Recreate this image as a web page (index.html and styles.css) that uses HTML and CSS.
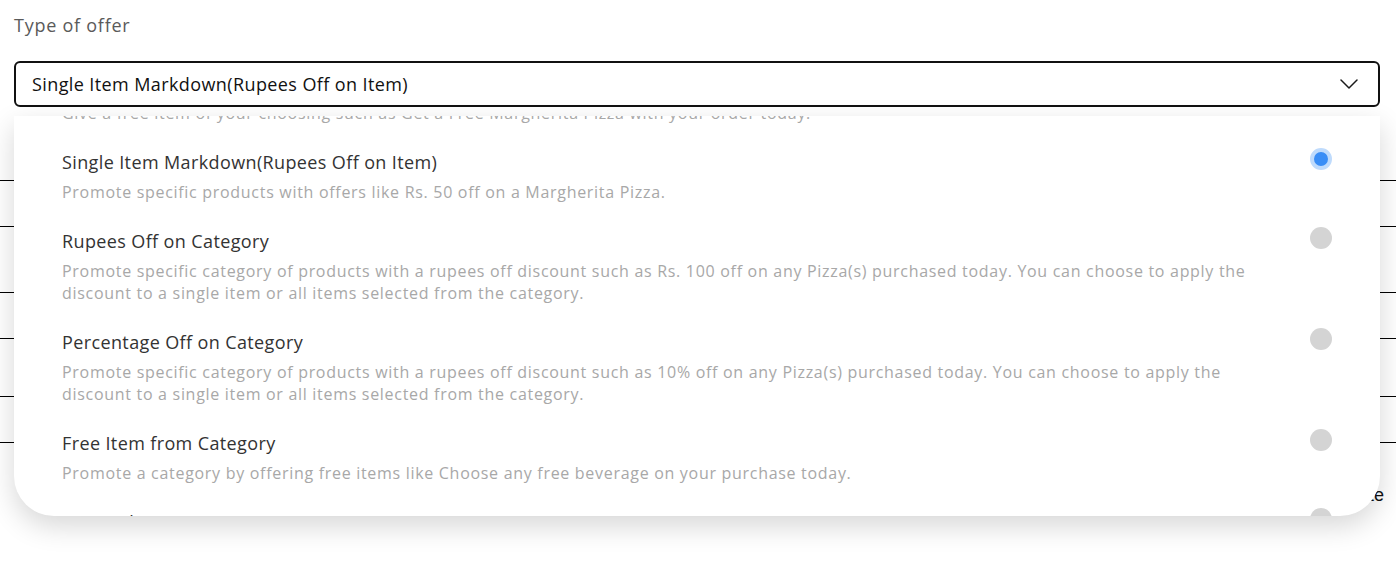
FILE: index.html
```html
<!DOCTYPE html>
<html lang="en">
<head>
<meta charset="utf-8">
<title>Type of offer</title>
<link rel="stylesheet" href="styles.css">
</head>
<body>
<div class="page">
  <div class="label">Type of offer</div>
  <div class="select">
    <span class="select-value">Single Item Markdown(Rupees Off on Item)</span>
    <svg class="chevron" width="18" height="10" viewBox="0 0 18 10"><path d="M1 1 L9 9 L17 1" fill="none" stroke="#1a1a1a" stroke-width="1.5" stroke-linecap="round" stroke-linejoin="round"/></svg>
  </div>

  <div class="behind">
    <div class="field f1"></div>
    <div class="field f2"></div>
    <div class="field f3"></div>
    <div class="field f2"></div>
    <div class="field f4"></div>
    <div class="field f2"></div>
    <div class="behind-text">Start Date</div>
  </div>

  <div class="panel">
    <div class="list">
      <div class="item">
        <div class="title">Free Item</div>
        <span class="radio"></span>
        <div class="desc">Give a free item of your choosing such as Get a Free Margherita Pizza with your order today.</div>
      </div>
      <div class="item">
        <div class="title">Single Item Markdown(Rupees Off on Item)</div>
        <span class="radio selected"></span>
        <div class="desc">Promote specific products with offers like Rs. 50 off on a Margherita Pizza.</div>
      </div>
      <div class="item">
        <div class="title">Rupees Off on Category</div>
        <span class="radio"></span>
        <div class="desc">Promote specific category of products with a rupees off discount such as Rs. 100 off on any Pizza(s) purchased today. You can choose to apply the discount to a single item or all items selected from the category.</div>
      </div>
      <div class="item">
        <div class="title">Percentage Off on Category</div>
        <span class="radio"></span>
        <div class="desc">Promote specific category of products with a rupees off discount such as 10% off on any Pizza(s) purchased today. You can choose to apply the discount to a single item or all items selected from the category.</div>
      </div>
      <div class="item">
        <div class="title">Free Item from Category</div>
        <span class="radio"></span>
        <div class="desc">Promote a category by offering free items like Choose any free beverage on your purchase today.</div>
      </div>
      <div class="item">
        <div class="title">Free Delivery</div>
        <span class="radio"></span>
        <div class="desc">Offer free delivery on orders above a minimum value.</div>
      </div>
    </div>
  </div>
</div>
</body>
</html>
```

FILE: styles.css
```css
html, body {
  margin: 0;
  background: #ffffff;
}

body {
  font-family: "Open Sans", Lato, "Noto Sans", Arial, sans-serif;
  color: #111;
}

.page {
  position: relative;
  box-sizing: border-box;
  min-height: 566px;
  padding: 13px 16px 0 14px;
}

.label {
  font-size: 18px;
  line-height: 24px;
  letter-spacing: 0.75px;
  color: #5a5a5a;
  margin-bottom: 24px;
}

.select {
  box-sizing: border-box;
  height: 46px;
  border: 2px solid #111;
  border-radius: 6px;
  display: flex;
  align-items: center;
  justify-content: space-between;
  padding: 0 20px 0 16px;
  font-size: 18px;
  letter-spacing: 0.4px;
  color: #111;
}

.chevron {
  display: block;
}

.behind {
  margin: 0 -16px 0 -14px;
}

.field {
  border-bottom: 1px solid #000;
}

.f1 { height: 73px; }
.f2 { height: 45px; }
.f3 { height: 65px; }
.f4 { height: 57px; }

.behind-text {
  text-align: right;
  font-family: "Liberation Sans", Arial, sans-serif;
  font-size: 18px;
  line-height: 24px;
  padding: 40px 12px 0 0;
  color: #111;
}

.panel {
  position: absolute;
  top: 116px;
  left: 14px;
  right: 16px;
  height: 400px;
  background: #fff;
  overflow: hidden;
  border-radius: 0 0 40px 40px;
  box-shadow: 0 10px 28px rgba(0, 0, 0, 0.16);
}

.list {
  margin-top: -45px;
}

.item {
  display: grid;
  grid-template-columns: 1fr 22px;
  padding: 0 48px;
  margin-bottom: 26px;
}

.title {
  font-size: 18px;
  line-height: 24px;
  letter-spacing: 0.38px;
  color: #333;
}

.radio {
  box-sizing: border-box;
  width: 22px;
  height: 22px;
  border-radius: 50%;
  background: #d4d4d4;
  margin-top: -2px;
}

.radio.selected {
  background: #3a8ef6;
  border: 4px solid #bfdbfc;
}

.desc {
  grid-column: 1 / -1;
  margin-top: 7px;
  padding-right: 40px;
  font-size: 16px;
  line-height: 22px;
  letter-spacing: 0.7px;
  color: #a8a8a8;
}
```
